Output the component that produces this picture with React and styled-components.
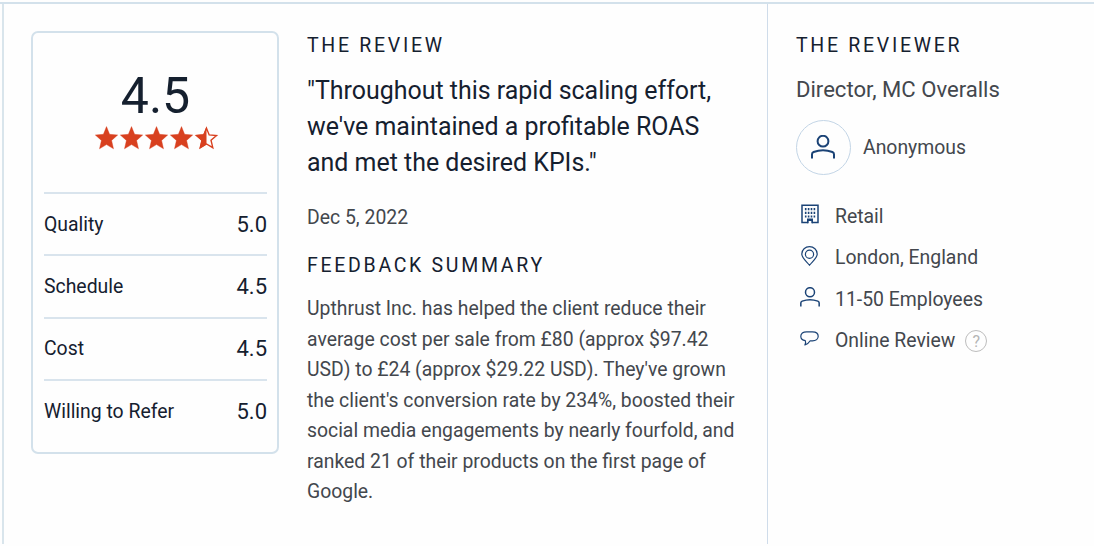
import React from 'react'
import styled, { createGlobalStyle } from 'styled-components';

const scores = [
  { label: 'Quality', value: '5.0' },
  { label: 'Schedule', value: '4.5' },
  { label: 'Cost', value: '4.5' },
  { label: 'Willing to Refer', value: '5.0' },
]

const STAR = 'M12 0.6 L15.1 8.3 L23.2 9 L17.1 14.4 L19 22.8 L12 18.6 L5 22.8 L6.9 14.4 L0.8 9 L8.9 8.3 Z'

const Star = ({ half }) => (
  <svg width="25" height="24" viewBox="-0.5 0 25 24">
    {half ? (
      <>
        <path d="M12 0.6 V18.6 L5 22.8 L6.9 14.4 L0.8 9 L8.9 8.3 Z" fill="#d8401f" />
        <path d="M12 2.2 L14.7 8.9 L22 9.5 L16.5 14.2 L18.3 21.7 L12 18 L5.7 21.7 L7.5 14.2 L2 9.5 L9.3 8.9 Z" fill="none" stroke="#d8401f" strokeWidth="1.4" />
      </>
    ) : (
      <path d={STAR} fill="#d8401f" stroke="#d8401f" strokeWidth="0.4" />
    )}
  </svg>
)

const PersonIcon = ({ size, stroke }) => (
  <svg width={size} height={size} viewBox="0 0 24 24" fill="none" stroke="#1b4376" strokeWidth={stroke}>
    <circle cx="12" cy="6.2" r="5.4" />
    <path d="M1 23.4 V19.2 Q1 17.6 2.6 17 Q12 13.4 21.4 17 Q23 17.6 23 19.2 V23.4" />
  </svg>
)

const BuildingIcon = () => (
  <svg width="18" height="20" viewBox="0 0 18 20" fill="none" stroke="#1b4376">
    <path d="M7 18.6 H1 V1.2 H17 V18.6 H11" strokeWidth="1.5" />
    <path d="M4.7 4 V13.6 M7.6 4 V13.6 M10.5 4 V13.6 M13.4 4 V13.6" strokeWidth="1.6" strokeDasharray="2.2 1.5" />
    <path d="M6 19.2 V14.4 H12 V19.2 H10.3 V17 H7.7 V19.2 Z" fill="#1b4376" stroke="none" />
  </svg>
)

const PinIcon = () => (
  <svg width="17" height="20" viewBox="0 0 17 20" fill="none" stroke="#1b4376" strokeWidth="1.2">
    <path d="M8.5 19.2 C6 15.8 0.8 12.2 0.8 8 A7.7 7.4 0 0 1 16.2 8 C16.2 12.2 11 15.8 8.5 19.2 Z" />
    <circle cx="8.5" cy="8.3" r="4.1" />
  </svg>
)

const BubbleIcon = () => (
  <svg width="19" height="15" viewBox="0 0 19 15" fill="none" stroke="#1b4376" strokeWidth="1.2" strokeLinejoin="round">
    <path d="M6.6 0.8 H12.4 C16 0.8 18.2 2.7 18.2 5.3 C18.2 7.9 16 9.8 12.4 9.8 H10.2 C9 11.8 7.3 13.2 4.9 14 C5.7 12.5 5.8 10.9 5.3 9.7 C2.6 9.3 0.8 7.6 0.8 5.3 C0.8 2.7 3 0.8 6.6 0.8 Z" />
  </svg>
)

const App = () => {
  return (
    <>
      <GlobalStyle />
      <Review>
        <Main>
          <ScoreCard>
            <Overall>
              <Total>4.5</Total>
              <Stars>
                <Star />
                <Star />
                <Star />
                <Star />
                <Star half />
              </Stars>
            </Overall>
            {scores.map((s) => (
              <ScoreRow key={s.label}>
                <span>{s.label}</span>
                <ScoreValue>{s.value}</ScoreValue>
              </ScoreRow>
            ))}
          </ScoreCard>
          <Content>
            <Heading>The Review</Heading>
            <Quote>
              "Throughout this rapid scaling effort,<br />
              we've maintained a profitable ROAS<br />
              and met the desired KPIs."
            </Quote>
            <Posted>Dec 5, 2022</Posted>
            <Heading>Feedback Summary</Heading>
            <Summary>
              Upthrust Inc. has helped the client reduce their<br />
              average cost per sale from £80 (approx $97.42<br />
              USD) to £24 (approx $29.22 USD). They've grown<br />
              the client's conversion rate by 234%, boosted their<br />
              social media engagements by nearly fourfold, and<br />
              ranked 21 of their products on the first page of<br />
              Google.
            </Summary>
          </Content>
          <Reviewer>
            <Heading>The Reviewer</Heading>
            <Position>Director, MC Overalls</Position>
            <Person>
              <Avatar><PersonIcon size={24} stroke={2} /></Avatar>
              <span>Anonymous</span>
            </Person>
            <Facts>
              <Fact><FactIcon><BuildingIcon /></FactIcon>Retail</Fact>
              <Fact><FactIcon><PinIcon /></FactIcon>London, England</Fact>
              <Fact><FactIcon><PersonIcon size={20} stroke={1.8} /></FactIcon>11-50 Employees</Fact>
              <Fact><FactIcon $lift={5}><BubbleIcon /></FactIcon>Online Review<Help>?</Help></Fact>
            </Facts>
          </Reviewer>
        </Main>
      </Review>
    </>
  )
}

export default App;

const GlobalStyle = createGlobalStyle`
*{
    box-sizing: border-box;
    margin: 0;
    padding: 0;
}
body{
    background: #fefefe;
    font-family: Roboto, "Liberation Sans", sans-serif;
    color: #15202f;
    overflow: hidden;
}
svg{
    display: block;
}
`
const Review = styled.div`
height: 542px;
margin-top: 2px;
padding-left: 2px;
border-top: 2px solid #d3e1eb;
`
const Main = styled.section`
display: flex;
height: 540px;
border-left: 2px solid #d9e5ec;
`
const ScoreCard = styled.div`
width: 248px;
height: 423px;
margin: 27px 0 0 27px;
padding: 0 10px 0 11px;
border: 2px solid #d3e1eb;
border-radius: 7px;
flex-shrink: 0;
`
const Overall = styled.div`
display: flex;
flex-direction: column;
align-items: center;
height: 159px;
padding-top: 35px;
`
const Total = styled.div`
font-size: 50px;
line-height: 56px;
`
const Stars = styled.div`
display: flex;
margin-top: 2px;
padding-left: 1px;
`
const ScoreRow = styled.div`
display: flex;
align-items: center;
justify-content: space-between;
height: 62.3px;
border-top: 2px solid #d9e4ed;
font-size: 19.4px;
`
const ScoreValue = styled.span`
font-size: 22px;
`
const Content = styled.div`
width: 460px;
margin-left: 28px;
padding-top: 28px;
flex-shrink: 0;
`
const Heading = styled.h3`
font-size: 19.5px;
font-weight: 400;
line-height: 28px;
letter-spacing: 2.7px;
text-transform: uppercase;
`
const Quote = styled.p`
margin-top: 13px;
font-size: 24.95px;
line-height: 36px;
white-space: nowrap;
`
const Posted = styled.p`
margin: 22px 0 20px;
font-size: 19.4px;
line-height: 29px;
color: #43474d;
`
const Summary = styled.p`
margin-top: 14px;
font-size: 19.37px;
line-height: 30.5px;
color: #43474d;
white-space: nowrap;
`
const Reviewer = styled.aside`
flex: 1;
padding: 28px 0 0 28px;
border-left: 1px solid #cfdcea;
color: #43474d;
${Heading}{
    color: #15202f;
}
`
const Position = styled.p`
margin-top: 13px;
font-size: 22.1px;
line-height: 32px;
`
const Person = styled.div`
display: flex;
align-items: center;
gap: 12px;
margin-top: 15px;
font-size: 19.4px;
`
const Avatar = styled.div`
display: flex;
align-items: center;
justify-content: center;
width: 55px;
height: 55px;
padding: 0 1px 1px 0;
border: 1px solid #c3d5e6;
border-radius: 50%;
`
const Facts = styled.ul`
margin-top: 20px;
list-style: none;
`
const Fact = styled.li`
display: flex;
align-items: center;
height: 41.5px;
padding-top: 1px;
font-size: 19.4px;
`
const FactIcon = styled.span`
display: flex;
justify-content: center;
width: 27px;
margin-right: 12px;
padding-bottom: ${({ $lift = 4 }) => $lift}px;
`
const Help = styled.span`
display: flex;
align-items: center;
justify-content: center;
width: 22px;
height: 22px;
margin: 1px 0 0 10px;
border: 1.5px solid #bdbdbd;
border-radius: 50%;
font-size: 16px;
color: #b5b5b5;
`
